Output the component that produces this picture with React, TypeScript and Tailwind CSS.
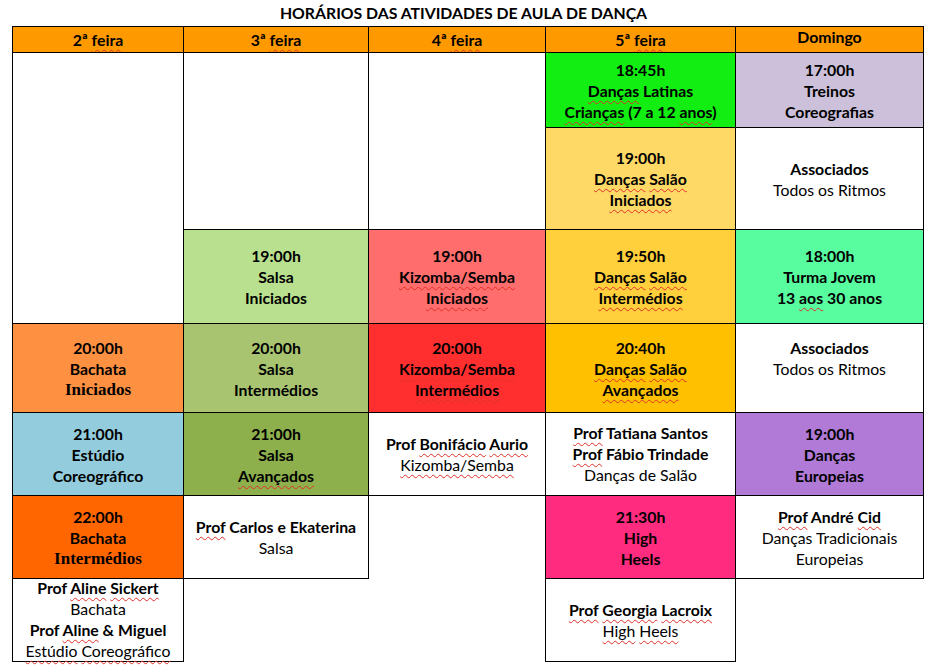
import React from 'react';

type Line = { t: string; b?: boolean; serif?: boolean };
type CellData = { pos: string; bg?: string; lines: Line[]; leading?: string };

// ~word~ marks a spell-check squiggle, like in the original Word document
function Text({ t }: { t: string }) {
  const parts = t.split(/(~[^~]+~)/);
  return (
    <span>
      {parts.map((p, i) =>
        p.startsWith('~') ? (
          <span key={i} className="underline decoration-wavy decoration-[#e0302a] decoration-1 underline-offset-[3px]">
            {p.slice(1, -1)}
          </span>
        ) : (
          <span key={i}>{p}</span>
        ),
      )}
    </span>
  );
}

const header = [
  { label: '2ª ~feira~', pad: '' },
  { label: '3ª ~feira~', pad: '' },
  { label: '4ª ~feira~', pad: '' },
  { label: '5ª ~feira~', pad: '' },
  { label: 'Domingo', pad: 'pb-[6px]' },
];

const cells: CellData[] = [
  // 2ª feira
  { pos: 'col-start-1 row-start-2 row-span-3', lines: [] },
  {
    pos: 'col-start-1 row-start-5',
    bg: 'bg-[#fd9041]',
    lines: [{ t: '20:00h', b: true }, { t: 'Bachata', b: true }, { t: 'Iniciados', b: true, serif: true }],
  },
  {
    pos: 'col-start-1 row-start-6',
    bg: 'bg-[#93cddd]',
    lines: [{ t: '21:00h', b: true }, { t: 'Estúdio', b: true }, { t: 'Coreográfico', b: true }],
  },
  {
    pos: 'col-start-1 row-start-7',
    bg: 'bg-[#ff6600]',
    lines: [{ t: '22:00h', b: true }, { t: 'Bachata', b: true }, { t: 'Intermédios', b: true, serif: true }],
  },
  {
    pos: 'col-start-1 row-start-8',
    leading: 'leading-[20px]',
    lines: [
      { t: 'Prof ~Aline~ ~Sickert~', b: true },
      { t: 'Bachata' },
      { t: 'Prof ~Aline~ & Miguel', b: true },
      { t: '~Estúdio~ ~Coreográfico~' },
    ],
  },
  // 3ª feira
  { pos: 'col-start-2 row-start-2 row-span-2', lines: [] },
  {
    pos: 'col-start-2 row-start-4',
    bg: 'bg-[#b9e08e]',
    lines: [{ t: '19:00h', b: true }, { t: 'Salsa', b: true }, { t: 'Iniciados', b: true }],
  },
  {
    pos: 'col-start-2 row-start-5',
    bg: 'bg-[#a9c470]',
    lines: [{ t: '20:00h', b: true }, { t: 'Salsa', b: true }, { t: 'Intermédios', b: true }],
  },
  {
    pos: 'col-start-2 row-start-6',
    bg: 'bg-[#8db04c]',
    lines: [{ t: '21:00h', b: true }, { t: 'Salsa', b: true }, { t: '~Avançados~', b: true }],
  },
  {
    pos: 'col-start-2 row-start-7',
    lines: [{ t: '~Prof~ Carlos e Ekaterina', b: true }, { t: 'Salsa' }],
  },
  // 4ª feira
  { pos: 'col-start-3 row-start-2 row-span-2', lines: [] },
  {
    pos: 'col-start-3 row-start-4',
    bg: 'bg-[#ff6d6d]',
    lines: [{ t: '19:00h', b: true }, { t: '~Kizomba/Semba~', b: true }, { t: '~Iniciados~', b: true }],
  },
  {
    pos: 'col-start-3 row-start-5',
    bg: 'bg-[#ff2f2f]',
    lines: [{ t: '20:00h', b: true }, { t: '~Kizomba/Semba~', b: true }, { t: '~Intermédios~', b: true }],
  },
  {
    pos: 'col-start-3 row-start-6',
    lines: [{ t: 'Prof ~Bonifácio~ ~Aurio~', b: true }, { t: '~Kizomba/Semba~' }],
  },
  // 5ª feira
  {
    pos: 'col-start-4 row-start-2',
    bg: 'bg-[#12ee12]',
    lines: [{ t: '18:45h', b: true }, { t: '~Danças~ Latinas', b: true }, { t: '~Crianças~ (7 a 12 ~anos~)', b: true }],
  },
  {
    pos: 'col-start-4 row-start-3',
    bg: 'bg-[#ffd966]',
    lines: [{ t: '19:00h', b: true }, { t: '~Danças~ ~Salão~', b: true }, { t: '~Iniciados~', b: true }],
  },
  {
    pos: 'col-start-4 row-start-4',
    bg: 'bg-[#ffd03b]',
    lines: [{ t: '19:50h', b: true }, { t: '~Danças~ ~Salão~', b: true }, { t: '~Intermédios~', b: true }],
  },
  {
    pos: 'col-start-4 row-start-5',
    bg: 'bg-[#ffc000]',
    lines: [{ t: '20:40h', b: true }, { t: '~Danças~ ~Salão~', b: true }, { t: '~Avançados~', b: true }],
  },
  {
    pos: 'col-start-4 row-start-6',
    leading: 'leading-[20px]',
    lines: [{ t: '~Prof~ Tatiana Santos', b: true }, { t: '~Prof~ Fábio Trindade', b: true }, { t: 'Danças de Salão' }],
  },
  {
    pos: 'col-start-4 row-start-7',
    bg: 'bg-[#ff2b7f]',
    lines: [{ t: '21:30h', b: true }, { t: 'High', b: true }, { t: 'Heels', b: true }],
  },
  {
    pos: 'col-start-4 row-start-8',
    lines: [{ t: '~Prof~ ~Georgia~ ~Lacroix~', b: true }, { t: '~High~ ~Heels~' }],
  },
  // Domingo
  {
    pos: 'col-start-5 row-start-2',
    bg: 'bg-[#ccc0da]',
    lines: [{ t: '17:00h', b: true }, { t: 'Treinos', b: true }, { t: 'Coreografias', b: true }],
  },
  {
    pos: 'col-start-5 row-start-3',
    lines: [{ t: 'Associados', b: true }, { t: 'Todos os Ritmos' }],
  },
  {
    pos: 'col-start-5 row-start-4',
    bg: 'bg-[#57fd9f]',
    lines: [{ t: '18:00h', b: true }, { t: 'Turma Jovem', b: true }, { t: '13 ~aos~ 30 anos', b: true }],
  },
  {
    pos: 'col-start-5 row-start-5',
    lines: [{ t: 'Associados', b: true }, { t: 'Todos os Ritmos' }, { t: '' }],
  },
  {
    pos: 'col-start-5 row-start-6',
    bg: 'bg-[#b07ad6]',
    lines: [{ t: '19:00h', b: true }, { t: 'Danças', b: true }, { t: 'Europeias', b: true }],
  },
  {
    pos: 'col-start-5 row-start-7',
    lines: [{ t: '~Prof~ André ~Cid~', b: true }, { t: 'Danças Tradicionais' }, { t: 'Europeias' }],
  },
];

function Cell({ c }: { c: CellData }) {
  return (
    <div
      className={`${c.pos} ${c.bg ?? 'bg-white'} ${c.leading ?? 'leading-[21px]'} -mr-px -mb-px flex flex-col items-center justify-center border border-black text-center`}
    >
      {c.lines.map((l, i) => (
        <div
          key={i}
          className={`${l.b ? 'font-bold' : 'font-normal'} ${
            l.serif ? "font-['Liberation_Serif',serif] text-[17px]" : ''
          } min-h-[21px] whitespace-nowrap`}
        >
          <Text t={l.t} />
        </div>
      ))}
    </div>
  );
}

export default function App() {
  return (
    <div className="h-[672px] w-[933px] bg-white font-[Lato,sans-serif] text-[15.8px] text-black">
      <div className="flex h-[26px] items-center justify-center pr-[6px] pb-[1px] font-bold">
        HORÁRIOS DAS ATIVIDADES DE AULA DE DANÇA
      </div>
      <div className="ml-[12px] grid w-[911px] grid-cols-[171px_185px_177px_190px_188px] grid-rows-[26px_75px_102px_94px_89px_83px_83px_83px]">
        {header.map((h, i) => (
          <div
            key={i}
            className={`row-start-1 -mr-px -mb-px flex items-center justify-center border border-black bg-[#ff9900] font-bold ${h.pad}`}
          >
            <Text t={h.label} />
          </div>
        ))}
        {cells.map((c, i) => (
          <Cell key={i} c={c} />
        ))}
      </div>
    </div>
  );
}
